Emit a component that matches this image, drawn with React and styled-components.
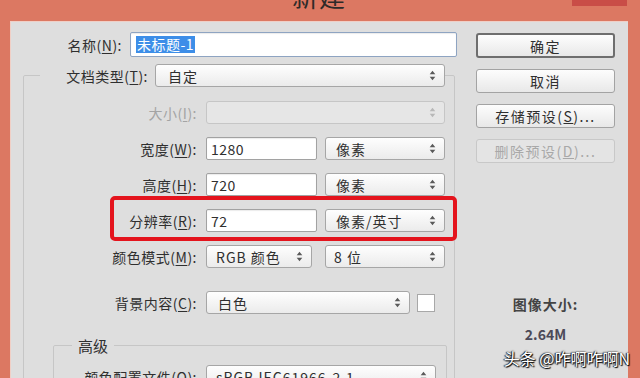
import React from 'react';
import styled, { createGlobalStyle } from 'styled-components';

const GlobalStyle = createGlobalStyle`
  html, body {
    margin: 0;
    padding: 0;
  }
  body {
    width: 640px;
    height: 378px;
    overflow: hidden;
    font-family: "Noto Sans CJK SC", "Noto Sans", sans-serif;
  }
`;

const Window = styled.div`
  position: relative;
  width: 640px;
  height: 378px;
  background: #dc7862;
  display: flex;
  flex-direction: column;
  overflow: hidden;
`;

const TitleBar = styled.div`
  height: 21px;
  flex: none;
  display: flex;
  align-items: flex-start;
`;

const Title = styled.div`
  margin-left: 292px;
  margin-top: -17px;
  font-size: 26px;
  line-height: 26px;
  color: #2e2a28;
  letter-spacing: 1px;
`;

const CloseButton = styled.div`
  margin-left: auto;
  margin-right: 13px;
  width: 55px;
  height: 6px;
  background: #c94d47;
`;

const Body = styled.div`
  flex: 1;
  margin: 0 12px 0 10px;
  border-left: 1px solid #f0cfc6;
  border-top: 1px solid #f0cfc6;
  background: #dedede;
  display: flex;
  overflow: hidden;
`;

const Main = styled.div`
  width: 455px;
  flex: none;
  display: flex;
  flex-direction: column;
`;

const Side = styled.div`
  width: 139px;
  margin-left: 10px;
  padding-top: 11px;
  display: flex;
  flex-direction: column;
  align-items: center;
`;

const Row = styled.div`
  position: relative;
  display: flex;
  align-items: center;
  height: 23px;
  gap: ${(p) => p.$gap ?? 9}px;
  margin-top: ${(p) => p.$top ?? 0}px;
`;

const Fields = styled.div`
  display: flex;
  align-items: center;
  gap: ${(p) => p.$gap ?? 8}px;
`;

const Label = styled.div`
  width: ${(p) => p.$w}px;
  flex: none;
  text-align: right;
  white-space: nowrap;
  font-size: 14px;
  letter-spacing: 0.5px;
  color: ${(p) => (p.$disabled ? '#a4a4a4' : '#2f2f2f')};

  u {
    text-underline-offset: 2px;
  }
`;

const Input = styled.div`
  box-sizing: border-box;
  width: ${(p) => p.$w}px;
  height: ${(p) => p.$h ?? 23}px;
  display: flex;
  align-items: center;
  padding-left: ${(p) => p.$pad ?? 5}px;
  background: #fff;
  border: 1px solid ${(p) => (p.$focus ? '#8ea4c2' : '#a2a2a2')};
  border-radius: 2px;
  box-shadow: inset 0 1px 1px rgba(0, 0, 0, 0.08);
  font-size: 14px;
  letter-spacing: 0.5px;
  color: #2f2f2f;
`;

const Selected = styled.span`
  background: #3d8ee8;
  color: #fff;
  padding: 0 1px;
  line-height: 17px;
`;

const SelectBox = styled.div`
  box-sizing: border-box;
  width: ${(p) => p.$w}px;
  height: 23px;
  flex: none;
  display: flex;
  align-items: center;
  justify-content: space-between;
  padding: 0 8px 0 ${(p) => p.$pad ?? 10}px;
  border: 1px solid ${(p) => (p.$disabled ? '#c6c6c6' : '#a6a6a6')};
  border-radius: 3px;
  background: ${(p) =>
    p.$disabled ? '#e6e6e6' : 'linear-gradient(#fefefe, #ebebeb)'};
  font-size: 14px;
  letter-spacing: 1px;
  color: #2f2f2f;
  white-space: nowrap;
`;

const Arrows = ({ disabled }) => (
  <svg width="7" height="11" viewBox="0 0 7 11">
    <path
      d="M3.5 0.8 L6.3 4.2 H0.7 Z M3.5 10.2 L6.3 6.8 H0.7 Z"
      fill={disabled ? '#b8b8b8' : '#5a5a5a'}
    />
  </svg>
);

const Select = ({ w, pad, disabled, children }) => (
  <SelectBox $w={w} $pad={pad} $disabled={disabled}>
    <span>{children}</span>
    <Arrows disabled={disabled} />
  </SelectBox>
);

const Swatch = styled.div`
  width: 18px;
  height: 18px;
  box-sizing: border-box;
  background: #fff;
  border: 1px solid #a8a8a8;
`;

const Group = styled.fieldset`
  box-sizing: border-box;
  width: ${(p) => p.$w}px;
  margin: ${(p) => p.$top}px 0 0 ${(p) => p.$left}px;
  padding: ${(p) => p.$padTop}px 0 60px 0;
  border: 1px solid #c6c6c6;
  border-radius: 2px;
  min-width: 0;
`;

const Legend = styled.legend`
  margin-left: ${(p) => p.$left}px;
  padding: 0 ${(p) => p.$pad ?? 0}px;
  display: flex;
  align-items: center;
  gap: 7px;
  font-size: ${(p) => p.$size ?? 14}px;
  color: #2f2f2f;
`;

const Stack = styled.div`
  display: flex;
  flex-direction: column;
  gap: 13px;
`;

const Annotation = styled.div`
  position: absolute;
  left: 86px;
  right: -3px;
  top: -13px;
  bottom: -9px;
  border: 4px solid #e4141d;
  border-radius: 5px;
  pointer-events: none;
`;

const Button = styled.div`
  box-sizing: border-box;
  width: 139px;
  height: ${(p) => (p.$primary ? 25 : 24)}px;
  margin-bottom: 11px;
  display: flex;
  align-items: center;
  justify-content: center;
  border: ${(p) => (p.$primary ? '2px solid #6e6e6e' : '1px solid #a3a3a3')};
  border-radius: 3px;
  background: ${(p) =>
    p.$disabled ? '#e4e4e4' : 'linear-gradient(#fdfdfd, #e8e8e8)'};
  font-size: 14px;
  letter-spacing: 1.5px;
  color: ${(p) => (p.$disabled ? '#a8a8a8' : '#2f2f2f')};
  border-color: ${(p) => (p.$disabled ? '#c8c8c8' : undefined)};
`;

const SizeTitle = styled.div`
  margin-top: ${(p) => p.$top}px;
  line-height: 20px;
  font-size: 14px;
  font-weight: 700;
  letter-spacing: 1px;
  color: #444;
`;

const SizeValue = styled.div`
  margin-top: 10px;
  line-height: 20px;
  font-size: 14px;
  font-weight: 700;
  color: #4c4a58;
`;

const Watermark = styled.div`
  position: absolute;
  right: 10px;
  top: 347px;
  font-size: 16px;
  line-height: 22px;
  color: #fff;
  white-space: nowrap;
  text-shadow: 0 0 2px #000, 1px 1px 1px #000, -1px 0 1px #222;
`;

export default function App() {
  return (
    <>
      <GlobalStyle />
      <Window>
        <TitleBar>
          <Title>新建</Title>
          <CloseButton />
        </TitleBar>
        <Body>
          <Main>
            <Row $top={11} $gap={8}>
              <Label $w={111}>
                名称(<u>N</u>):
              </Label>
              <Input $w={327} $h={25} $focus>
                <Selected>未标题-1</Selected>
              </Input>
            </Row>

            <Group $w={432} $top={8} $left={12} $padTop={14}>
              <Legend $left={16}>
                <Label $w={108}>
                  文档类型(<u>T</u>):
                </Label>
                <Select w={290} pad={12}>
                  自定
                </Select>
              </Legend>

              <Stack>
                <Row>
                  <Label $w={173} $disabled>
                    大小(<u>I</u>):
                  </Label>
                  <Select w={239} disabled />
                </Row>
                <Row>
                  <Label $w={173}>
                    宽度(<u>W</u>):
                  </Label>
                  <Fields>
                    <Input $w={111} $pad={4}>1280</Input>
                    <Select w={120}>像素</Select>
                  </Fields>
                </Row>
                <Row>
                  <Label $w={173}>
                    高度(<u>H</u>):
                  </Label>
                  <Fields>
                    <Input $w={111} $pad={4}>720</Input>
                    <Select w={120}>像素</Select>
                  </Fields>
                </Row>
                <Row>
                  <Label $w={173}>
                    分辨率(<u>R</u>):
                  </Label>
                  <Fields>
                    <Input $w={111} $pad={4}>72</Input>
                    <Select w={120}>像素/英寸</Select>
                  </Fields>
                  <Annotation />
                </Row>
                <Row>
                  <Label $w={173}>
                    颜色模式(<u>M</u>):
                  </Label>
                  <Fields $gap={13}>
                    <Select w={106} pad={9}>
                      RGB 颜色
                    </Select>
                    <Select w={120} pad={8}>
                      8 位
                    </Select>
                  </Fields>
                </Row>
                <Row $top={10}>
                  <Label $w={173}>
                    背景内容(<u>C</u>):
                  </Label>
                  <Fields $gap={7}>
                    <Select w={204} pad={11}>
                      白色
                    </Select>
                    <Swatch />
                  </Fields>
                </Row>
              </Stack>

              <Group $w={394} $top={21} $left={29} $padTop={9}>
                <Legend $left={18} $pad={6} $size={15}>
                  高级
                </Legend>
                <Row>
                  <Label $w={143}>
                    颜色配置文件(<u>O</u>):
                  </Label>
                  <Select w={230} pad={9}>
                    sRGB IEC61966-2.1
                  </Select>
                </Row>
              </Group>
            </Group>
          </Main>

          <Side>
            <Button $primary>确定</Button>
            <Button>取消</Button>
            <Button>
              存储预设(<u>S</u>)...
            </Button>
            <Button $disabled>
              删除预设(<u>D</u>)...
            </Button>
            <SizeTitle $top={120}>图像大小:</SizeTitle>
            <SizeValue>2.64M</SizeValue>
          </Side>
        </Body>
        <Watermark>头条 @咋啊咋啊N</Watermark>
      </Window>
    </>
  );
}
